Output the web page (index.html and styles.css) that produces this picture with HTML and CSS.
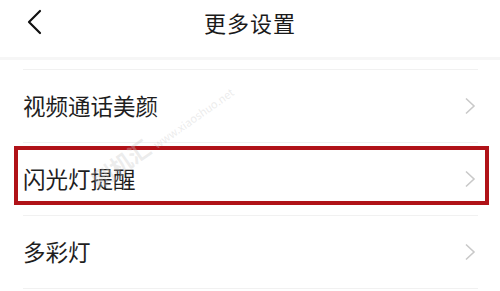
FILE: index.html
```html
<!DOCTYPE html>
<html lang="zh">
<head>
<meta charset="utf-8">
<link rel="stylesheet" href="styles.css">
</head>
<body>
<div class="page">
  <header class="header">
    <svg class="back" width="16" height="26" viewBox="0 0 16 26"><path d="M14 2 L3 13 L14 24" fill="none" stroke="#111" stroke-width="2.2" stroke-linecap="round" stroke-linejoin="round"/></svg>
    <h1 class="title">更多设置</h1>
  </header>
  <ul class="list">
    <li class="row"><span class="label">视频通话美颜</span><svg class="chev" width="12" height="18" viewBox="0 0 12 18"><path d="M2 1.5 L10 9 L2 16.5" fill="none" stroke="#c9c9c9" stroke-width="1.6"/></svg></li>
    <li class="row"><span class="label">闪光灯提醒</span><svg class="chev" width="12" height="18" viewBox="0 0 12 18"><path d="M2 1.5 L10 9 L2 16.5" fill="none" stroke="#c9c9c9" stroke-width="1.6"/></svg></li>
    <li class="row"><span class="label">多彩灯</span><svg class="chev" width="12" height="18" viewBox="0 0 12 18"><path d="M2 1.5 L10 9 L2 16.5" fill="none" stroke="#c9c9c9" stroke-width="1.6"/></svg></li>
  </ul>
  <div class="highlight"></div>
  <div class="watermark">刷机汇 <small>www.xiaoshuo.net</small></div>
</div>
</body>
</html>
```
FILE: styles.css
```css
html, body {
  margin: 0;
  padding: 0;
  background: #ffffff;
}
.page {
  position: relative;
  width: 500px;
  height: 291px;
  overflow: hidden;
  font-family: "Noto Sans CJK SC", "Noto Sans", sans-serif;
  color: #1e1e1e;
}
.header {
  position: relative;
  height: 57px;
  display: flex;
  align-items: center;
  justify-content: center;
  border-bottom: 3px solid #f6f6f6;
}
.back {
  position: absolute;
  left: 26px;
  top: 9px;
}
.title {
  margin: 0;
  margin-top: -14px;
  font-size: 22px;
  font-weight: 400;
  letter-spacing: 1px;
  color: #1a1a1a;
}
.list {
  list-style: none;
  margin: 9px 0 0 0;
  padding: 0 22px 0 23px;
}
.row {
  height: 72px;
  display: flex;
  align-items: center;
  justify-content: space-between;
  border-top: 1px solid #f1f1f1;
}
.row:last-child {
  border-bottom: 1px solid #f1f1f1;
}
.label {
  font-size: 22.5px;
  line-height: 1;
  color: #1e1e1e;
  margin-top: -1px;
}
.chev {
  margin-right: 2px;
}
.highlight {
  position: absolute;
  left: 14px;
  top: 146px;
  width: 467px;
  height: 51px;
  border: 4px solid #b01218;
}
.watermark {
  position: absolute;
  left: 78px;
  top: 118px;
  transform: rotate(-35deg);
  font-size: 22px;
  font-weight: 700;
  color: rgba(200, 200, 200, 0.35);
  white-space: nowrap;
}
.watermark small {
  font-size: 11px;
  font-weight: 400;
}
```
